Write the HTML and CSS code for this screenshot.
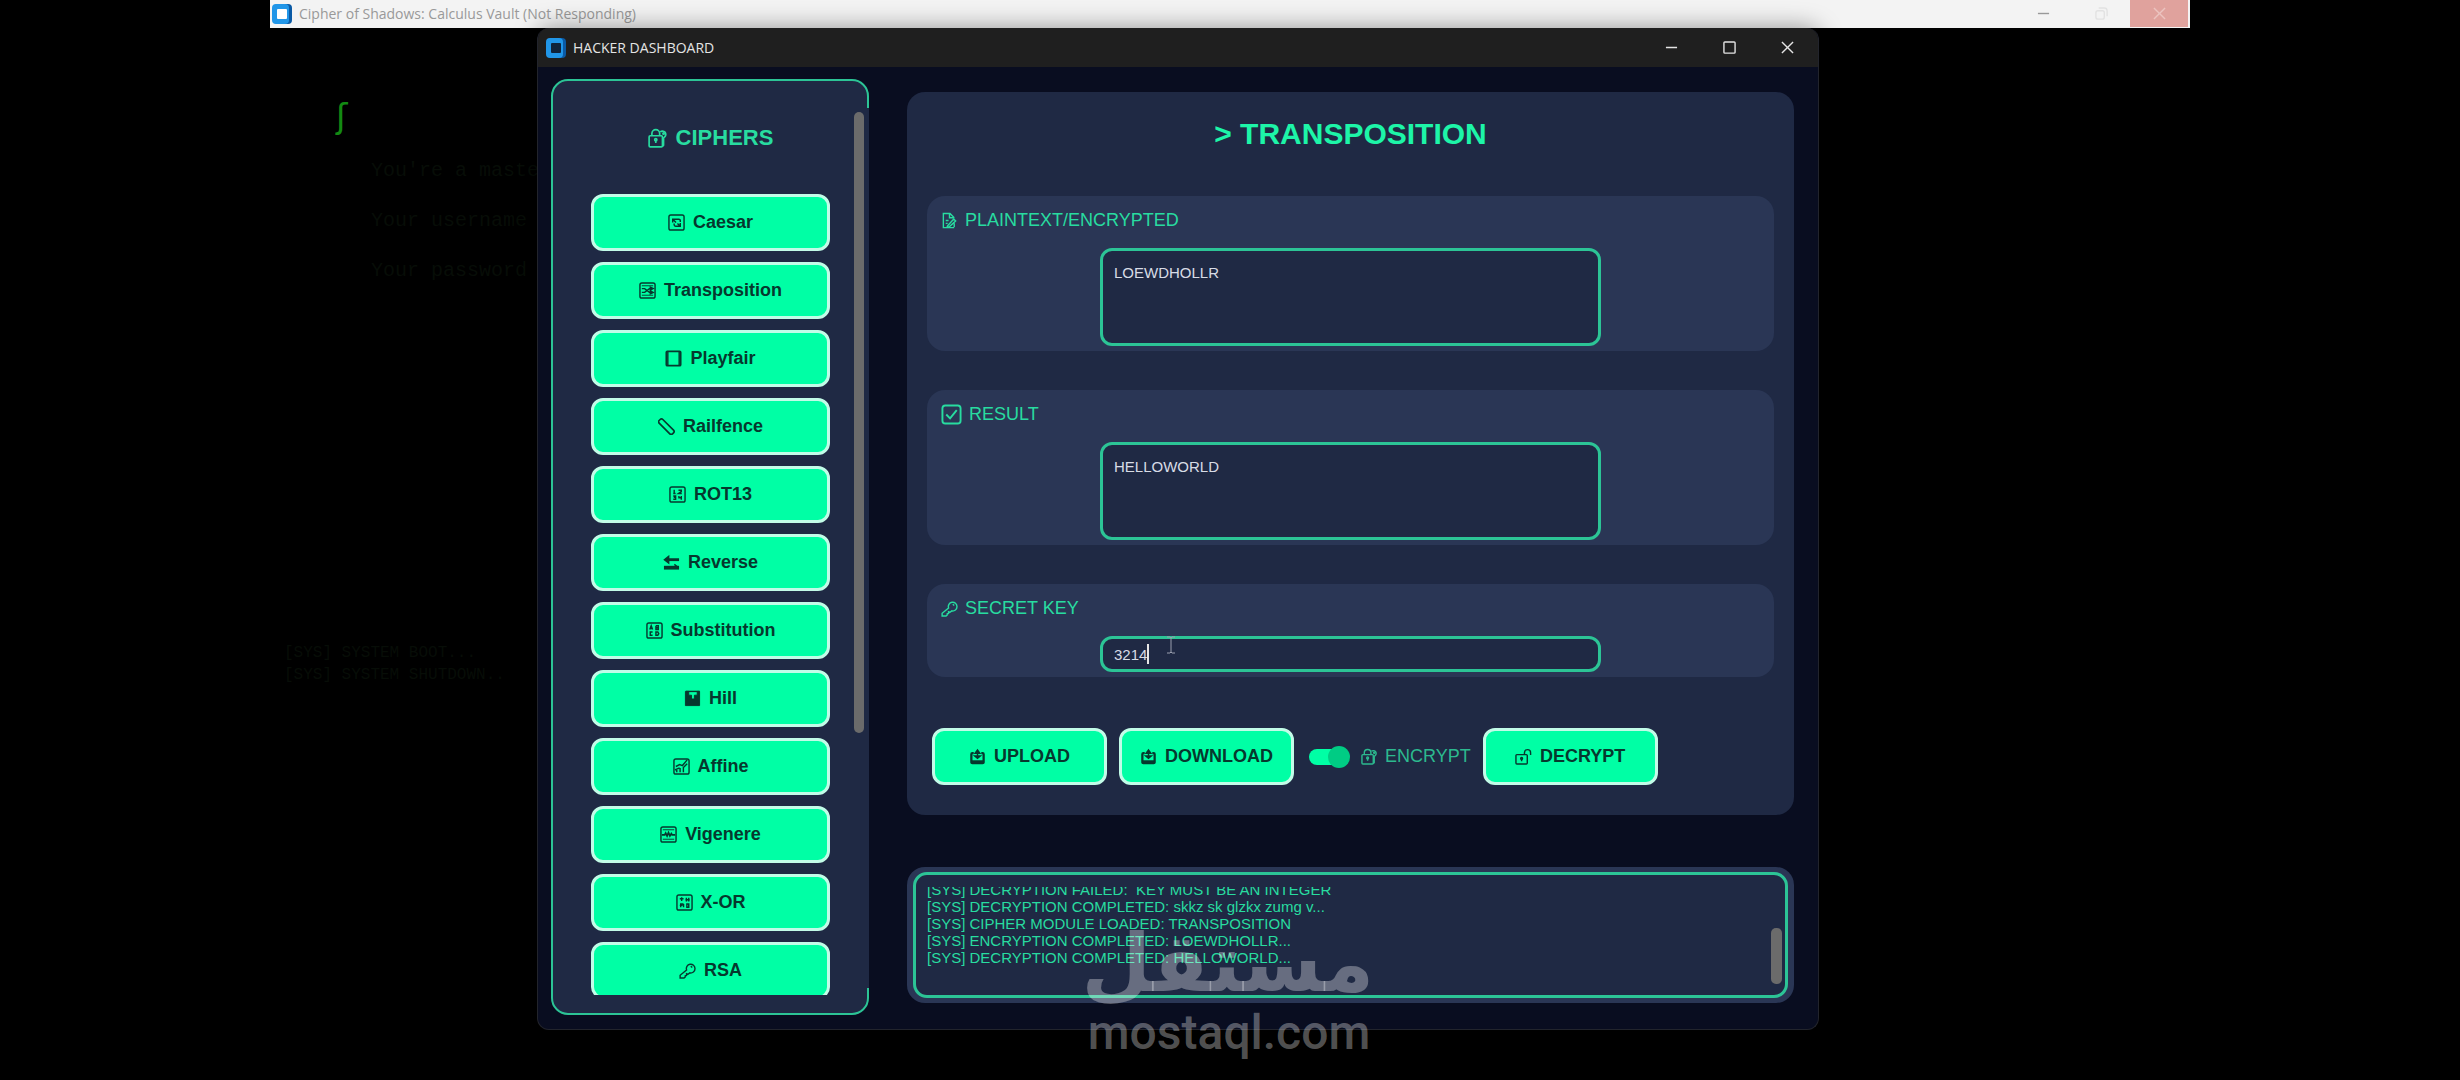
FILE: index.html
```html
<!DOCTYPE html>
<html lang="en">
<head>
    <meta charset="UTF-8">
    <meta name="viewport" content="width=device-width, initial-scale=1.0">
    <title>Hacker Dashboard</title>
    <link rel="stylesheet" href="styles.css">
</head>
<body>

    <!-- icon sprite -->
    <svg class="sprite" aria-hidden="true">
        <symbol id="app" viewBox="0 0 20 20">
            <rect x="2" y="0" width="18" height="20" rx="4" fill="#0a5aa5"/>
            <rect x="0" y="0" width="17" height="20" rx="4" fill="#2196e8"/>
            <rect x="5" y="5" width="10" height="10" rx="1" fill="currentColor"/>
        </symbol>
        <symbol id="minimize" viewBox="0 0 14 14"><path d="M1 7h12"/></symbol>
        <symbol id="maximize" viewBox="0 0 14 14"><rect x="1" y="1" width="12" height="12" rx="1"/></symbol>
        <symbol id="restore" viewBox="0 0 14 14"><rect x="1" y="4" width="9" height="9" rx="2"/><path d="M4 1h6a3 3 0 0 1 3 3v6"/></symbol>
        <symbol id="close" viewBox="0 0 14 14"><path d="M1 1l12 12M13 1L1 13"/></symbol>
        <symbol id="lock-key" viewBox="0 0 18 18">
            <rect x="1" y="7" width="12" height="10" rx="1"/>
            <path d="M3.500 7V5a3.500 3.500 0 0 1 7 0v2M7 10.500v3"/>
            <circle cx="7" cy="10.500" r="1"/>
            <path d="M11 3.500a3 3 0 1 1 4 4.500l-1 1v6.500l-1 1"/>
            <circle cx="14" cy="5" r="0.600"/>
        </symbol>
        <symbol id="unlock" viewBox="0 0 18 18">
            <rect x="1" y="7" width="12" height="10" rx="1"/>
            <path d="M10 7V5a3.200 3.200 0 0 1 6.500 0v2.500M7 11v3"/>
            <circle cx="7" cy="11" r="1"/>
        </symbol>
        <symbol id="loop" viewBox="0 0 18 18">
            <rect x="1" y="1" width="16" height="16" rx="2"/>
            <path d="M5 9V5.500h6.500a1.500 1.500 0 0 1 1.500 1.500v1.500M5 5.500l3.500 3.500M13 9.500v3.500H8a1.500 1.500 0 0 1-1.500-1.500V10M13 13l-3-3"/>
        </symbol>
        <symbol id="shuffle" viewBox="0 0 18 18">
            <rect x="1" y="1" width="16" height="16" rx="2"/>
            <path d="M3 4h12M3 14h12" stroke-width="1"/>
            <path d="M3 7h3l5 4h3M3 11h3l5-4h3M12 5.500l3 1.500-3 1.500zM12 9.500l3 1.500-3 1.500z"/>
        </symbol>
        <symbol id="square" viewBox="0 0 18 18">
            <rect x="1.500" y="1.500" width="15" height="15" rx="1" stroke-width="2"/>
            <path d="M3 2v14M15 2v14"/>
        </symbol>
        <symbol id="rail" viewBox="0 0 18 18">
            <rect x="-1" y="6.500" width="20" height="5.500" rx="2" transform="rotate(45 9 9)" stroke-width="1.800"/>
        </symbol>
        <symbol id="digits" viewBox="0 0 18 18">
            <rect x="1" y="1" width="16" height="16" rx="2"/>
            <path d="M5.500 4v4M4.500 8h2.500M10 4.500h3v1.500l-3 2h3.500M4.500 10.500h2.500v3.500H4.500M5 12h2M10.500 10.500v2h3M13 10.500V14.500"/>
        </symbol>
        <symbol id="arrows" viewBox="0 0 18 18">
            <path d="M3 6h14" stroke-width="3"/>
            <path d="M6 2.500L1.500 6 6 9.500z" fill="currentColor"/>
            <path d="M1 14.500h16" stroke-width="4"/>
            <path d="M12 11l4 3" />
        </symbol>
        <symbol id="letters" viewBox="0 0 18 18">
            <rect x="1" y="1" width="16" height="16" rx="2"/>
            <path d="M4 8l1.500-4L7 8M4.500 6.800h2M10.500 4v4h2.500V4h-2.500M10.500 6h2.500M7 10.500H4.500V14H7M10.500 10.500V14h2l1-1.700-1-1.800z"/>
        </symbol>
        <symbol id="hill" viewBox="0 0 18 18">
            <path d="M1.500 1.500h3.500v4h3v4h3v-4h3v-4H16.500V16.500H1.500z" stroke-width="1" fill="currentColor"/>
            <path d="M2 1.500h14.500"/>
        </symbol>
        <symbol id="chart" viewBox="0 0 18 18">
            <rect x="1" y="1" width="16" height="16" rx="2"/>
            <path d="M3 9l4-2 3 1 5-6M4 15v-3.500M7.500 15v-4.500M11 15v-5l4-4M2 12.500l5-2"/>
        </symbol>
        <symbol id="wave" viewBox="0 0 18 18">
            <rect x="1" y="1" width="16" height="16" rx="2"/>
            <path d="M3 4h12M3 14h12" stroke-width="1"/>
            <path d="M2 9.500h3l1-2 1.500 3L9 7l1.500 3.500L12 8l1 1.500h3" stroke-width="1.800"/>
        </symbol>
        <symbol id="bits" viewBox="0 0 18 18">
            <rect x="1" y="1" width="16" height="16" rx="2"/>
            <path d="M4 5h4M6 3.500v4M11 4v4M13.500 4v4M10 6h4.500M5 14v-3.500h3M8 10.500V14M11.500 10.500h2V14h-2zM4 12h3"/>
        </symbol>
        <symbol id="key" viewBox="0 0 18 18">
            <path d="M8 8.500a4.600 4.600 0 1 1 3.500 3L9.500 13 8 12.500v1.700l-1.300.3-.2 1.500-1.200 1H1.200V14z"/>
            <path d="M12.500 4.500l1.500 1.300"/>
        </symbol>
        <symbol id="note" viewBox="0 0 16 18">
            <path d="M13 16.500H1.500v-15h7l4 4v1.500M8 2v4h4M4 9h3M4 12h2"/>
            <path d="M6 14.500l6.500-7 2 2-6.500 6-2.500.5zM13 12v4"/>
        </symbol>
        <symbol id="check" viewBox="0 0 22 22">
            <rect x="1.500" y="1.500" width="19" height="19" rx="3"/>
            <path d="M5.500 11l4 4 7-8.500"/>
        </symbol>
        <symbol id="tray" viewBox="0 0 18 18">
            <path d="M5 5.500H3.500a1 1 0 0 0-1 1V15a1 1 0 0 0 1 1h11a1 1 0 0 0 1-1V6.500a1 1 0 0 0-1-1H13" stroke-width="2.400"/>
            <path d="M9 9V4M6.500 5.500L9 2l2.500 3.500zM6 8.500l3 2.500 3-2.500z" fill="currentColor"/>
            <path d="M3 14.500h12" stroke-width="3"/>
        </symbol>
    </svg>

    <!-- game window behind -->
    <div class="game">
        <header class="game-bar">
            <svg class="app-icon light"><use href="#app"/></svg>
            <span class="game-title">Cipher of Shadows: Calculus Vault (Not Responding)</span>
            <button class="win-btn" aria-label="Minimize"><svg class="win-icon"><use href="#minimize"/></svg></button>
            <button class="win-btn faint" aria-label="Restore"><svg class="win-icon"><use href="#restore"/></svg></button>
            <button class="win-btn red" aria-label="Close"><svg class="win-icon"><use href="#close"/></svg></button>
        </header>
        <div class="integral">ʃ</div>
        <div class="story">
            <p>You're a master</p>
            <p>Your username</p>
            <p>Your password</p>
        </div>
        <div class="boot">
            <p>[SYS] SYSTEM BOOT...</p>
            <p>[SYS] SYSTEM SHUTDOWN..</p>
        </div>
    </div>

    <!-- dashboard window -->
    <div class="window">
        <header class="window-bar">
            <svg class="app-icon"><use href="#app"/></svg>
            <span class="window-title">HACKER DASHBOARD</span>
            <button class="win-btn" aria-label="Minimize"><svg class="win-icon"><use href="#minimize"/></svg></button>
            <button class="win-btn" aria-label="Maximize"><svg class="win-icon"><use href="#maximize"/></svg></button>
            <button class="win-btn" aria-label="Close"><svg class="win-icon"><use href="#close"/></svg></button>
        </header>

        <div class="content">
            <aside class="sidebar">
                <nav class="cipher-list">
                    <h2><svg class="icon"><use href="#lock-key"/></svg>CIPHERS</h2>
                    <button class="btn"><svg class="icon"><use href="#loop"/></svg>Caesar</button>
                    <button class="btn"><svg class="icon"><use href="#shuffle"/></svg>Transposition</button>
                    <button class="btn"><svg class="icon"><use href="#square"/></svg>Playfair</button>
                    <button class="btn"><svg class="icon"><use href="#rail"/></svg>Railfence</button>
                    <button class="btn"><svg class="icon"><use href="#digits"/></svg>ROT13</button>
                    <button class="btn"><svg class="icon"><use href="#arrows"/></svg>Reverse</button>
                    <button class="btn"><svg class="icon"><use href="#letters"/></svg>Substitution</button>
                    <button class="btn"><svg class="icon"><use href="#hill"/></svg>Hill</button>
                    <button class="btn"><svg class="icon"><use href="#chart"/></svg>Affine</button>
                    <button class="btn"><svg class="icon"><use href="#wave"/></svg>Vigenere</button>
                    <button class="btn"><svg class="icon"><use href="#bits"/></svg>X-OR</button>
                    <button class="btn"><svg class="icon"><use href="#key"/></svg>RSA</button>
                </nav>
                <div class="scroll-thumb"></div>
            </aside>

            <main class="main">
                <div class="panel">
                    <h1>&gt; TRANSPOSITION</h1>

                    <section class="field">
                        <label for="plaintext"><svg class="icon"><use href="#note"/></svg>PLAINTEXT/ENCRYPTED</label>
                        <div class="box"><textarea id="plaintext" spellcheck="false">LOEWDHOLLR</textarea></div>
                    </section>

                    <section class="field">
                        <label for="result"><svg class="icon big"><use href="#check"/></svg>RESULT</label>
                        <div class="box"><textarea id="result" spellcheck="false">HELLOWORLD</textarea></div>
                    </section>

                    <section class="field">
                        <label for="key-input"><svg class="icon"><use href="#key"/></svg>SECRET KEY</label>
                        <div class="box">
                            <input type="text" id="key-input" value="3214">
                            <span class="caret"></span>
                            <svg class="pointer" viewBox="0 0 10 18"><path d="M1 1h3l1 1 1-1h3M5 2v14M1 17h3l1-1 1 1h3"/></svg>
                        </div>
                    </section>

                    <div class="actions">
                        <button class="btn"><svg class="icon"><use href="#tray"/></svg>UPLOAD</button>
                        <button class="btn"><svg class="icon"><use href="#tray"/></svg>DOWNLOAD</button>
                        <label class="toggle">
                            <input type="checkbox" checked>
                            <svg class="icon"><use href="#lock-key"/></svg>ENCRYPT
                        </label>
                        <button class="btn"><svg class="icon"><use href="#unlock"/></svg>DECRYPT</button>
                    </div>
                </div>

                <div class="console">
                    <div class="console-box">
                        <div class="log">
                            <p>[SYS] DECRYPTION FAILED:&nbsp; KEY MUST BE AN INTEGER</p>
                            <p>[SYS] DECRYPTION COMPLETED: skkz sk glzkx zumg v...</p>
                            <p>[SYS] CIPHER MODULE LOADED: TRANSPOSITION</p>
                            <p>[SYS] ENCRYPTION COMPLETED: LOEWDHOLLR...</p>
                            <p>[SYS] DECRYPTION COMPLETED: HELLOWORLD...</p>
                        </div>
                        <div class="log-thumb"></div>
                    </div>
                </div>
            </main>
        </div>
    </div>

    <div class="watermark">
        <div class="watermark-ar" lang="ar" dir="rtl">مستقل</div>
        <div class="watermark-en">mostaql.com</div>
    </div>

</body>
</html>
```
FILE: styles.css
```css
* {
    box-sizing: border-box;
}
body {
    margin: 0;
    height: 100vh;
    position: relative;
    overflow: hidden;
    background: #000;
    color: #28dca0;
    font-family: "Liberation Sans", Arial, sans-serif;
}
p, h1, h2 {
    margin: 0;
}
button {
    font-family: inherit;
    cursor: pointer;
}
.sprite {
    display: none;
}
.icon {
    width: 17px;
    height: 17px;
    flex: none;
    fill: none;
    stroke: currentColor;
    stroke-width: 1.5;
}
.icon.big {
    width: 21px;
    height: 21px;
    stroke-width: 2;
}

/* background window */
.game {
    margin: 0 270px;
}
.game-bar {
    display: flex;
    align-items: center;
    height: 28px;
    padding: 0 2px 1px;
    background: #f3f3f3;
    color: #999;
}
.app-icon {
    width: 20px;
    height: 20px;
    flex: none;
    color: #10233a;
}
.app-icon.light {
    color: #fff;
}
.game-title,
.window-title {
    flex: 1;
    padding-left: 7px;
    font-family: "Open Sans", sans-serif;
    font-size: 14px;
}
.win-btn {
    display: flex;
    align-items: center;
    justify-content: center;
    align-self: stretch;
    width: 58px;
    padding: 0;
    border: none;
    background: none;
    color: inherit;
}
.win-icon {
    width: 13px;
    height: 13px;
    fill: none;
    stroke: currentColor;
    stroke-width: 1.5;
}
.win-btn.faint {
    color: #e2e2e2;
}
.win-btn.red {
    background: #e0a29d;
    color: #ecc4c0;
}
.integral {
    padding: 68px 0 0 66px;
    color: #138a13;
    font-family: "DejaVu Sans", sans-serif;
    font-size: 34px;
    line-height: 40px;
}
.story {
    padding: 10px 0 0 101px;
    color: #070d07;
    font-family: "Liberation Mono", monospace;
    font-size: 20px;
    line-height: 50px;
}
.boot {
    padding: 346px 0 0 14px;
    color: #070d07;
    font-family: "Liberation Mono", monospace;
    font-size: 16px;
    line-height: 22px;
}

/* dashboard */
.window {
    position: absolute;
    top: 28px;
    right: 641px;
    bottom: 50px;
    left: 537px;
    display: flex;
    flex-direction: column;
    border: 1px solid #22242c;
    border-top: none;
    border-radius: 12px;
    overflow: hidden;
    background: #090d20;
    box-shadow: 0 0 24px rgba(0, 0, 0, 0.4);
}
.window-bar {
    display: flex;
    align-items: center;
    height: 39px;
    padding: 0 2px 0 8px;
    background: #1f1f1f;
    color: #e4e4e4;
}
.content {
    flex: 1;
    display: flex;
    gap: 38px;
    min-height: 0;
    padding: 12px 24px 14px 13px;
}
.sidebar {
    position: relative;
    display: flex;
    width: 318px;
    padding: 27px 3px 18px 38px;
    border: 2px solid #2cc496;
    border-radius: 17px;
    background: #1f2944;
}
/* scroll area covers the right border */
.sidebar::after {
    content: "";
    position: absolute;
    top: 27px;
    right: -2px;
    bottom: 25px;
    width: 2px;
    background: #1f2944;
}
.cipher-list {
    flex: 1;
    display: flex;
    flex-direction: column;
    gap: 11px;
    padding-right: 24px;
    overflow: hidden;
}
h2 {
    display: flex;
    align-items: center;
    justify-content: center;
    gap: 8px;
    padding: 16px 0 31px;
    font-size: 22px;
    line-height: 28px;
}
h2 .icon {
    width: 20px;
    height: 20px;
}
.scroll-thumb {
    width: 10px;
    height: 70%;
    margin-top: 4px;
    border-radius: 5px;
    background: #6b6b6b;
}
.btn {
    display: flex;
    align-items: center;
    justify-content: center;
    gap: 8px;
    flex: none;
    height: 57px;
    padding: 0;
    border: 3px solid #c2fce8;
    border-radius: 12px;
    background: #00ffa5;
    color: #06382e;
    font-size: 18px;
    font-weight: bold;
}
.btn:hover {
    background: #00cc84;
}

.main {
    flex: 1;
    display: flex;
    flex-direction: column;
    gap: 52px;
    padding-top: 13px;
}
.panel {
    padding: 24px 20px 30px;
    border-radius: 18px;
    background: #1f2944;
}
h1 {
    margin-bottom: 44px;
    color: #1df5a8;
    font-size: 30px;
    line-height: 36px;
    text-align: center;
}
.field {
    margin-bottom: 39px;
    padding: 12px 14px 5px;
    border-radius: 18px;
    background: #2a3655;
}
.field label {
    display: flex;
    align-items: center;
    gap: 7px;
    font-size: 18px;
    line-height: 24px;
}
.box {
    position: relative;
    width: 501px;
    max-width: 100%;
    margin: 16px auto 0;
}
textarea,
input[type="text"] {
    display: block;
    width: 100%;
    padding: 12px 11px;
    border: 3px solid #2cc496;
    border-radius: 12px;
    outline: none;
    resize: none;
    background: #1f2944;
    color: #d8dce6;
    font-family: inherit;
    font-size: 15px;
    line-height: 20px;
}
textarea {
    height: 98px;
}
input[type="text"] {
    height: 36px;
    padding: 0 11px;
}
.caret {
    position: absolute;
    top: 8px;
    left: 47px;
    width: 2px;
    height: 20px;
    background: #e6e6e6;
}
.pointer {
    position: absolute;
    top: 0;
    left: 66px;
    width: 10px;
    height: 18px;
    fill: none;
    stroke: #9a9fae;
}
.actions {
    display: flex;
    align-items: center;
    gap: 12px;
    padding: 12px 0 0 5px;
}
.actions .btn {
    width: 175px;
}
.toggle {
    display: flex;
    align-items: center;
    gap: 7px;
    padding-left: 3px;
    color: #2cb98f;
    font-size: 18px;
}
.toggle input {
    appearance: none;
    position: relative;
    width: 40px;
    height: 16px;
    margin: 0 5px 0 0;
    border-radius: 8px;
    background: #00ffa5;
}
.toggle input::after {
    content: "";
    position: absolute;
    top: -3px;
    right: -1px;
    width: 22px;
    height: 22px;
    border-radius: 50%;
    background: #00cc84;
}

.console {
    padding: 5px 6px;
    border-radius: 18px;
    background: #2a3655;
}
.console-box {
    display: flex;
    padding: 12px 3px 11px 11px;
    border: 3px solid #2cc496;
    border-radius: 14px;
    background: #1f2944;
}
.log {
    flex: 1;
    height: 97px;
    overflow: hidden;
    font-size: 15px;
    line-height: 17px;
}
/* scrolled a few pixels into the first line */
.log p:first-child {
    margin-top: -6px;
}
.log-thumb {
    align-self: flex-end;
    width: 11px;
    height: 56px;
    border-radius: 5px;
    background: #6b6b6b;
}

.watermark {
    position: absolute;
    bottom: 20px;
    left: 1084px;
    width: 290px;
    color: rgba(255, 255, 255, 0.32);
    text-align: center;
    white-space: nowrap;
    pointer-events: none;
}
.watermark-ar {
    font-family: "DejaVu Sans", sans-serif;
    font-size: 80px;
    font-weight: bold;
    line-height: 84px;
}
.watermark-en {
    font-family: Roboto, sans-serif;
    font-size: 48px;
    font-weight: 500;
    line-height: 54px;
}
```
